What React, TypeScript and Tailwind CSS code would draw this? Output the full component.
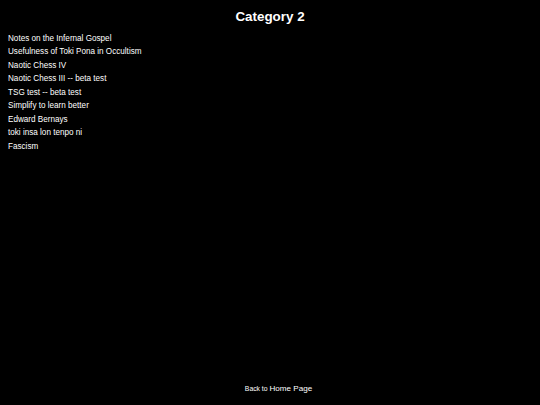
export default function App() {
  const items = [
    "Notes on the Infernal Gospel",
    "Usefulness of Toki Pona in Occultism",
    "Naotic Chess IV",
    "Naotic Chess III -- beta test",
    "TSG test -- beta test",
    "Simplify to learn better",
    "Edward Bernays",
    "toki insa lon tenpo ni",
    "Fascism",
  ];
  return (
    <div className="min-h-screen bg-black text-white flex flex-col" style={{ fontFamily: '"Liberation Sans", Arial, sans-serif' }}>
      <h1 className="text-center font-bold text-[13.4px] leading-[13.5px] pt-[10px]">Category 2</h1>
      <ul className="mt-[8px] pl-[8px] flex flex-col">
        {items.map((t) => (
          <li key={t} className="text-[8.15px] leading-[13.5px]">{t}</li>
        ))}
      </ul>
      <div className="mt-auto pb-[11px] text-center leading-[10px] pl-[17px]">
        <span className="text-[6.8px]">Back to </span>
        <span className="text-[8.1px]">Home Page</span>
      </div>
    </div>
  );
}
